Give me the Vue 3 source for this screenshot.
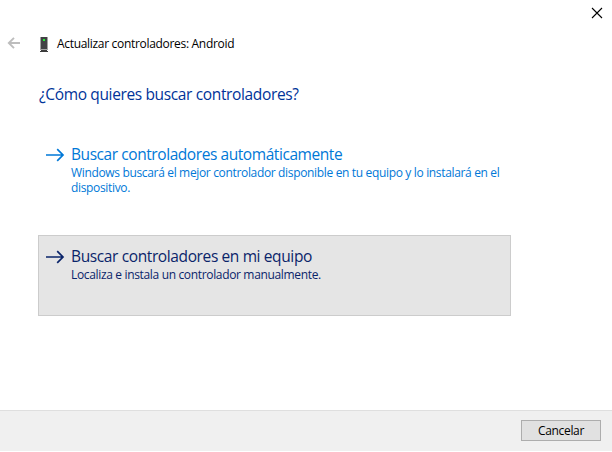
<script setup>
const options = [
  {
    id: 'auto',
    title: 'Buscar controladores automáticamente',
    text: 'Windows buscará el mejor controlador disponible en tu equipo y lo instalará en el dispositivo.',
  },
  {
    id: 'manual',
    title: 'Buscar controladores en mi equipo',
    text: 'Localiza e instala un controlador manualmente.',
  },
]
</script>

<template>
  <main class="dialog">
    <div class="titlebar">
      <svg class="close" width="12" height="12" viewBox="0 0 12 12"><path d="M1 1 11 11M11 1 1 11" /></svg>
    </div>
    <header class="header">
      <svg class="back" width="14" height="12" viewBox="0 0 14 12"><path d="M13 6H2M7 .8 1.8 6 7 11.2" /></svg>
      <svg class="device" width="10" height="16" viewBox="0 0 10 16" shape-rendering="crispEdges">
        <rect x="1" y="1" width="8" height="13" fill="#a2a2a2" />
        <rect x="2" y="1" width="6" height="12" fill="#414144" />
        <rect x="4" y="3" width="2" height="2" fill="#22f032" />
        <rect x="2" y="14" width="6" height="1" fill="#3c3c3c" />
        <rect x="1" y="15" width="8" height="1" fill="#3c3c3c" />
      </svg>
      <span class="caption">Actualizar controladores: Android</span>
    </header>
    <h1 class="question">¿Cómo quieres buscar controladores?</h1>
    <section class="options">
      <button v-for="o in options" :key="o.id" class="option" :class="o.id">
        <svg class="arrow" width="19" height="14" viewBox="0 0 19 14"><path d="M0 7H17M11.2 1.2 17 7l-5.8 5.8" /></svg>
        <span class="copy">
          <span class="title">{{ o.title }}</span>
          <span class="text">{{ o.text }}</span>
        </span>
      </button>
    </section>
    <footer class="footer">
      <button class="cancel">Cancelar</button>
    </footer>
  </main>
</template>

<style>
body { background: #fff; }
</style>

<style scoped>
* { box-sizing: border-box; }
.dialog {
  width: 612px;
  height: 451px;
  display: flex;
  flex-direction: column;
  background: #fff;
  color: #000;
  font-family: "Open Sans", "Noto Sans", sans-serif;
  font-size: 12px;
  letter-spacing: -0.33px;
  overflow: hidden;
}
svg { display: block; flex: none; fill: none; }
button { font: inherit; letter-spacing: inherit; margin: 0; border-radius: 0; text-align: left; }
.titlebar { height: 28px; padding: 7px 9px 0 0; display: flex; justify-content: flex-end; }
.close { stroke: #000; stroke-width: 1.1; }
.header { height: 32px; display: flex; align-items: center; padding-left: 7px; }
.back { stroke: #bdbdbd; stroke-width: 1.9; margin-top: -2px; }
.device { margin: -1px 8px 0 18px; }
.caption { line-height: 16px; letter-spacing: -0.31px; white-space: nowrap; }
.question {
  margin: 23px 0 0 39px;
  font-size: 15.5px;
  letter-spacing: -0.36px;
  font-weight: 400;
  line-height: 22px;
  height: 22px;
  color: #003399;
  white-space: nowrap;
}
.options { margin: 28px 0 0 38px; width: 473px; display: flex; flex-direction: column; gap: 21px; }
.option {
  height: 81px;
  display: flex;
  align-items: flex-start;
  padding: 10px 0 0 7px;
  gap: 6px;
  border: 1px solid transparent;
  background: transparent;
  color: #0078d7;
}
.manual { background: #e5e5e5; border-color: #cccccc; color: #0a246a; }
.arrow { stroke: currentColor; stroke-width: 1.7; margin-top: 4px; }
.copy { display: flex; flex-direction: column; width: 434px; }
.title { font-size: 15.5px; line-height: 21px; letter-spacing: -0.43px; white-space: nowrap; }
.manual .title { letter-spacing: -0.38px; }
.text { line-height: 15px; letter-spacing: -0.34px; }
.footer {
  margin-top: auto;
  height: 41px;
  background: #f0f0f0;
  border-top: 1px solid #dfdfdf;
  display: flex;
  justify-content: flex-end;
  padding: 9px 11px 0 0;
}
.cancel {
  width: 80px;
  height: 21px;
  padding: 0;
  border: 1px solid #adadad;
  background: #e1e1e1;
  color: #000;
  line-height: 19px;
  text-align: center;
}
</style>
